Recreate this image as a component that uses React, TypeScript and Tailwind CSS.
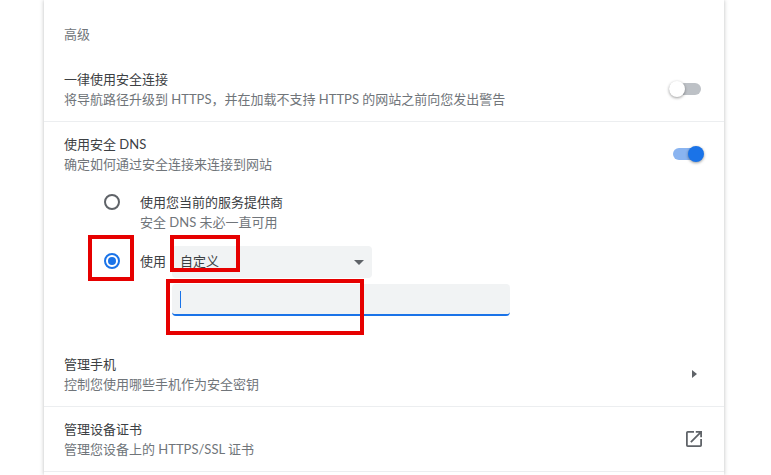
const font = { fontFamily: 'Lato, "Noto Sans CJK SC", sans-serif' };

function Row({ title, sub, children, className }: { title: string; sub: string; children?: React.ReactNode; className?: string }) {
  return (
    <div className={`flex items-center justify-between pl-5 ${className ?? ''}`}>
      <div>
        <p className="text-[13px] leading-[20px] text-[#3c4043]">{title}</p>
        <p className="text-[13px] leading-[20px] text-[#70757a]">{sub}</p>
      </div>
      {children}
    </div>
  );
}

function Toggle({ on }: { on: boolean }) {
  return (
    <div className={`relative h-3 rounded-full ${on ? 'w-[28px] bg-[#8ab4f0]' : 'w-[32px] bg-[#bdc1c6]'}`}>
      <div
        className={`absolute top-[-2px] h-4 w-4 rounded-full shadow-[0_1px_3px_rgba(0,0,0,0.4)] ${on ? 'right-[-3px] bg-[#1a73e8]' : 'left-0 bg-white'}`}
      />
    </div>
  );
}

function RedBox({ className }: { className: string }) {
  return <div className={`pointer-events-none absolute border-4 border-[#e60000] ${className}`} />;
}

export default function App() {
  return (
    <div className="relative h-[475px] w-[771px] overflow-hidden bg-white" style={font}>
      <div className="ml-[44px] h-[475px] w-[680px] bg-white shadow-[0_0_4px_rgba(60,64,67,0.35)]">
        <p className="pl-5 pt-[24px] text-[13px] leading-[20px] text-[#70757a]">高级</p>

        <Row
          title="一律使用安全连接"
          sub="将导航路径升级到 HTTPS，并在加载不支持 HTTPS 的网站之前向您发出警告"
          className="mt-[24px] h-[42px] pr-[23px]"
        >
          <Toggle on={false} />
        </Row>

        <div className="mt-[11px] border-t border-[#eceef0] pt-[12px]">
          <Row title="使用安全 DNS" sub="确定如何通过安全连接来连接到网站" className="h-[40px] pr-[23px]">
            <Toggle on />
          </Row>

          <div className="mt-[18px] flex pl-[60px]">
            <div className="mt-[2px] h-4 w-4 rounded-full border-2 border-[#5f6368]" />
            <div className="ml-[20px]">
              <p className="text-[13px] leading-[20px] text-[#3c4043]">使用您当前的服务提供商</p>
              <p className="text-[13px] leading-[20px] text-[#70757a]">安全 DNS 未必一直可用</p>
            </div>
          </div>

          <div className="mt-[14px] flex pl-[60px]">
            <div className="mt-[7px] flex h-4 w-4 items-center justify-center rounded-full border-2 border-[#1a73e8]">
              <div className="h-2 w-2 rounded-full bg-[#1a73e8]" />
            </div>
            <div className="ml-[20px]">
              <div className="flex">
                <span className="mt-[5px] w-[32px] text-[13px] leading-[20px] text-[#3c4043]">使用</span>
                <div className="flex h-8 w-[200px] items-center justify-between rounded-[4px] bg-[#f1f3f4] pl-2 pr-2">
                  <span className="text-[13px] text-[#3c4043]">自定义</span>
                  <svg width="10" height="5" viewBox="0 0 10 5">
                    <path d="M0 0h10L5 5z" fill="#5f6368" />
                  </svg>
                </div>
              </div>
              <div className="ml-[32px] mt-[6px] flex h-8 w-[338px] items-center rounded-[4px] border-b-2 border-[#1a73e8] bg-[#f1f3f4] pl-2">
                <div className="h-[17px] w-px bg-[#1a73e8]" />
              </div>
            </div>
          </div>
        </div>

        <Row
          title="管理手机"
          sub="控制您使用哪些手机作为安全密钥"
          className="mt-[38px] h-[40px] pr-[27px]"
        >
          <svg width="5" height="8" viewBox="0 0 5 8">
            <path d="M0 0l5 4-5 4z" fill="#5f6368" />
          </svg>
        </Row>

        <div className="mt-[12px] border-t border-[#eceef0] pt-[12px]">
          <Row title="管理设备证书" sub="管理您设备上的 HTTPS/SSL 证书" className="h-[40px] pr-[22px]">
            <svg width="16" height="16" viewBox="3 3 18 18" fill="#5f6368">
              <path d="M19 19H5V5h7V3H5a2 2 0 0 0-2 2v14a2 2 0 0 0 2 2h14a2 2 0 0 0 2-2v-7h-2v7zM14 3v2h3.59l-9.83 9.83 1.41 1.41L19 6.41V10h2V3h-7z" />
            </svg>
          </Row>
        </div>

        <div className="mt-[12px] border-t border-[#eceef0]" />
      </div>

      <RedBox className="left-[88px] top-[235px] h-[46px] w-[46px]" />
      <RedBox className="left-[170px] top-[235px] h-[37px] w-[70px]" />
      <RedBox className="left-[166px] top-[279px] h-[56px] w-[198px]" />
    </div>
  );
}
